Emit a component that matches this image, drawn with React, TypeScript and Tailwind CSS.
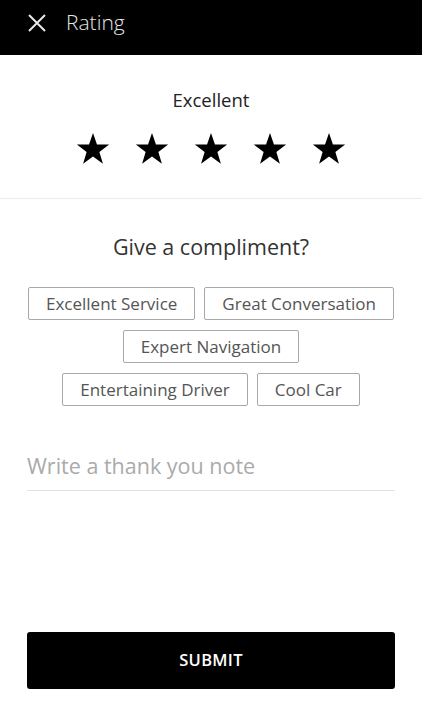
import { useState } from "react";

const compliments = [
  ["Excellent Service", "Great Conversation"],
  ["Expert Navigation"],
  ["Entertaining Driver", "Cool Car"],
];

const Star = () => (
  <svg width="34" height="33" viewBox="0 0 24 23" className="shrink-0">
    <polygon
      points="12,0.5 14.8,8.6 23.4,8.7 16.5,13.9 19,22.2 12,17.2 5,22.2 7.5,13.9 0.6,8.7 9.2,8.6"
      fill="#000"
    />
  </svg>
);

const App = () => {
  const [note, setNote] = useState("");

  return (
    <div className="w-[422px] h-[713px] flex flex-col bg-white font-['Open_Sans',sans-serif]">
      <div className="h-[55px] bg-black">
        <div className="h-[46px] flex items-center px-[28px] gap-[20px]">
          <svg width="18" height="18" viewBox="0 0 18 18">
            <path d="M1 1 L17 17 M17 1 L1 17" stroke="#e8e8e8" strokeWidth="2" />
          </svg>
          <span className="text-[21px] font-light text-[#e6e6e6]">Rating</span>
        </div>
      </div>

      <div className="flex flex-col items-center pt-[31px] pb-[33px] border-b border-[#ececec]">
        <p className="text-[18.5px] text-[#222] leading-[28px]">Excellent</p>
        <div className="flex gap-[25px] mt-[18px]">
          <Star />
          <Star />
          <Star />
          <Star />
          <Star />
        </div>
      </div>

      <div className="flex flex-col items-center pt-[33px]">
        <p className="text-[21.5px] text-[#333] leading-[30px]">Give a compliment?</p>
        <div className="flex flex-col items-center gap-[10px] mt-[25px]">
          {compliments.map((row, i) => (
            <div key={i} className="flex gap-[9px]">
              {row.map((c) => (
                <button
                  key={c}
                  className="h-[33px] px-[17px] border border-[#a8a8a8] rounded-[2px] text-[17px] text-[#555] leading-none"
                >
                  {c}
                </button>
              ))}
            </div>
          ))}
        </div>
      </div>

      <div className="mx-[27px] mt-[42px] border-b border-[#e2e2e2]">
        <input
          value={note}
          onChange={(e) => setNote(e.target.value)}
          placeholder="Write a thank you note"
          className="w-full h-[42px] pb-[8px] text-[21.5px] text-[#333] placeholder:text-[#aaa] outline-none bg-transparent"
        />
      </div>

      <div className="mt-auto px-[27px] pb-[24px]">
        <button className="w-full h-[57px] bg-black rounded-[3px] text-white text-[16.5px] font-semibold tracking-[0.3px]">
          SUBMIT
        </button>
      </div>
    </div>
  );
};

export default App;
